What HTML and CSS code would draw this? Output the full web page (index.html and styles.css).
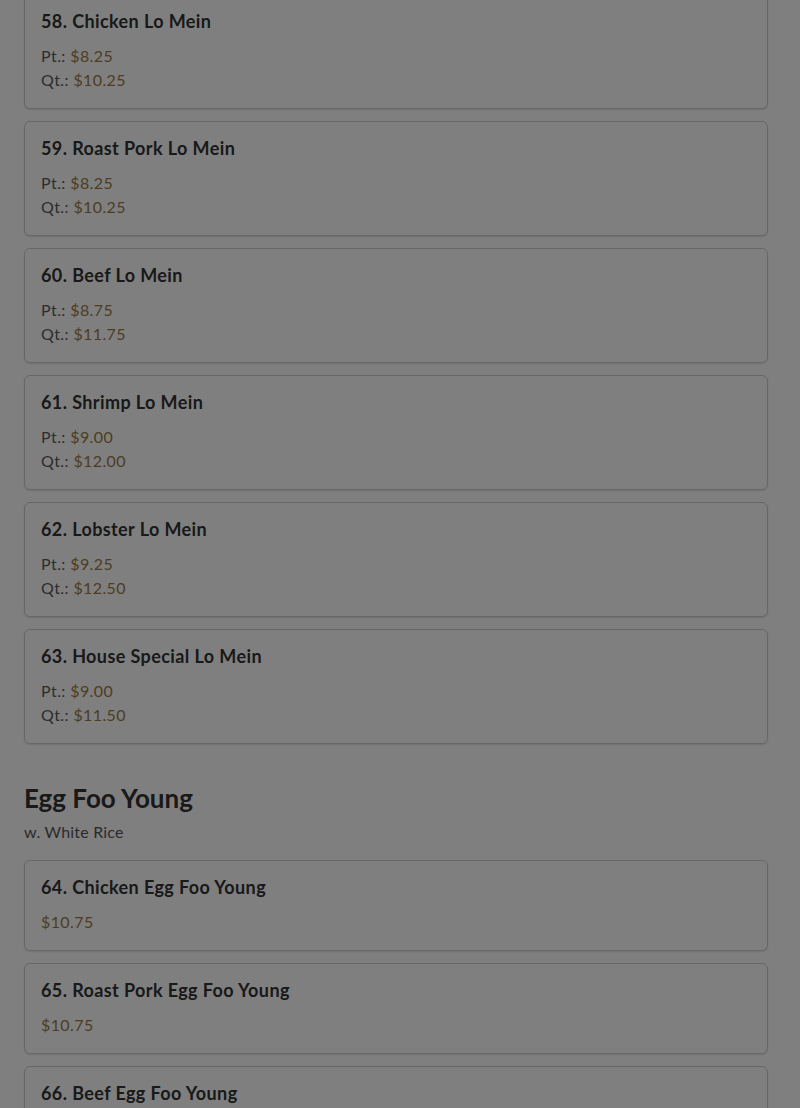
FILE: index.html
```html
<!DOCTYPE html>
<html lang="en">
<head>
<meta charset="utf-8">
<title>Menu</title>
<link rel="stylesheet" href="styles.css">
</head>
<body>
<main class="menu">
  <section class="section">
    <div class="items">
      <article class="card">
        <h3 class="item-name">58. Chicken Lo Mein</h3>
        <div class="prices">
          <div class="price-row"><span class="label">Pt.:</span> <span class="price">$8.25</span></div>
          <div class="price-row"><span class="label">Qt.:</span> <span class="price">$10.25</span></div>
        </div>
      </article>
      <article class="card">
        <h3 class="item-name">59. Roast Pork Lo Mein</h3>
        <div class="prices">
          <div class="price-row"><span class="label">Pt.:</span> <span class="price">$8.25</span></div>
          <div class="price-row"><span class="label">Qt.:</span> <span class="price">$10.25</span></div>
        </div>
      </article>
      <article class="card">
        <h3 class="item-name">60. Beef Lo Mein</h3>
        <div class="prices">
          <div class="price-row"><span class="label">Pt.:</span> <span class="price">$8.75</span></div>
          <div class="price-row"><span class="label">Qt.:</span> <span class="price">$11.75</span></div>
        </div>
      </article>
      <article class="card">
        <h3 class="item-name">61. Shrimp Lo Mein</h3>
        <div class="prices">
          <div class="price-row"><span class="label">Pt.:</span> <span class="price">$9.00</span></div>
          <div class="price-row"><span class="label">Qt.:</span> <span class="price">$12.00</span></div>
        </div>
      </article>
      <article class="card">
        <h3 class="item-name">62. Lobster Lo Mein</h3>
        <div class="prices">
          <div class="price-row"><span class="label">Pt.:</span> <span class="price">$9.25</span></div>
          <div class="price-row"><span class="label">Qt.:</span> <span class="price">$12.50</span></div>
        </div>
      </article>
      <article class="card">
        <h3 class="item-name">63. House Special Lo Mein</h3>
        <div class="prices">
          <div class="price-row"><span class="label">Pt.:</span> <span class="price">$9.00</span></div>
          <div class="price-row"><span class="label">Qt.:</span> <span class="price">$11.50</span></div>
        </div>
      </article>
    </div>
  </section>

  <section class="section">
    <h2 class="section-title">Egg Foo Young</h2>
    <p class="section-note">w. White Rice</p>
    <div class="items">
      <article class="card">
        <h3 class="item-name">64. Chicken Egg Foo Young</h3>
        <div class="prices">
          <div class="price-row"><span class="price">$10.75</span></div>
        </div>
      </article>
      <article class="card">
        <h3 class="item-name">65. Roast Pork Egg Foo Young</h3>
        <div class="prices">
          <div class="price-row"><span class="price">$10.75</span></div>
        </div>
      </article>
      <article class="card">
        <h3 class="item-name">66. Beef Egg Foo Young</h3>
        <div class="prices">
          <div class="price-row"><span class="price">$10.75</span></div>
        </div>
      </article>
    </div>
  </section>
</main>
<div class="backdrop"></div>
</body>
</html>
```

FILE: styles.css
```css
html, body {
  margin: 0;
  padding: 0;
  background: #ffffff;
}

body {
  font-family: Lato, "Noto Sans", "Liberation Sans", sans-serif;
  color: #333333;
  overflow: hidden;
}

.menu {
  padding: 0 32px 0 24px;
  margin-top: -6px;
  display: flex;
  flex-direction: column;
  gap: 39px;
}

.items {
  display: flex;
  flex-direction: column;
  gap: 12px;
}

.card {
  border: 1px solid #cfcfcf;
  border-radius: 6px;
  padding: 15px 16px 16px;
  background: #ffffff;
  box-shadow: 0 1px 2px rgba(0, 0, 0, 0.12);
}

.item-name {
  margin: 0 0 12px;
  font-size: 18px;
  line-height: 22px;
  font-weight: 700;
  letter-spacing: 0.4px;
  color: #333333;
}

.prices {
  font-size: 16px;
  line-height: 24px;
  letter-spacing: 0.4px;
}

.label {
  color: #5a5a5a;
}

.price {
  color: #9c7a44;
}

.section-title {
  margin: 0;
  font-size: 26px;
  line-height: 30px;
  font-weight: 700;
  color: #333333;
}

.section-note {
  margin: 7px 0 16px;
  font-size: 16px;
  line-height: 24px;
  letter-spacing: 0.2px;
  color: #555555;
}

.backdrop {
  position: fixed;
  inset: 0;
  background: rgba(0, 0, 0, 0.5);
}
```
